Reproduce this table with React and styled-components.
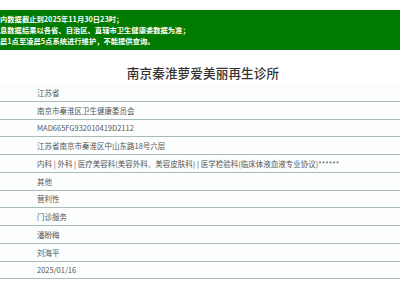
import React from "react";
import styled, { createGlobalStyle } from "styled-components";

const Global = createGlobalStyle`
  html, body { margin: 0; padding: 0; background: #ffffff; }
  body { font-family: "Noto Sans CJK SC", "Noto Sans", sans-serif; }
`;

const Page = styled.div`
  width: 400px;
  height: 286px;
  overflow: hidden;
  background: #ffffff;
  padding-top: 10px;
  box-sizing: border-box;
`;

const Banner = styled.div`
  background: #007a00;
  color: #ffffff;
  height: 40px;
  box-sizing: border-box;
  padding: 4px 0 0 0;
  overflow: hidden;
`;

const BannerLine = styled.div`
  font-size: 7.3px;
  font-weight: 700;
  line-height: 11px;
  white-space: nowrap;
`;

const TitleBox = styled.div`
  height: 34px;
  box-sizing: border-box;
  padding-top: 15px;
  text-align: center;
`;

const Title = styled.h1`
  margin: 0;
  font-size: 12.6px;
  line-height: 16px;
  font-weight: 500;
  color: #333333;
  letter-spacing: 0.1px;
  padding-left: 6px;
`;

const Table = styled.div`
  display: flex;
  flex-direction: column;
`;

const Row = styled.div`
  display: grid;
  grid-template-columns: 37px 1fr;
  align-items: center;
  height: 17.75px;
  box-sizing: border-box;
  border-bottom: 1px solid #a9bcb6;
  background: #fcfefe;
`;

const Label = styled.div``;

const Value = styled.div`
  font-size: 7.5px;
  line-height: 10px;
  color: #555555;
  white-space: nowrap;
  padding-top: 1px;
`;

const rows = [
  "江苏省",
  "南京市秦淮区卫生健康委员会",
  "MAD665FG932010419D2112",
  "江苏省南京市秦淮区中山东路18号六层",
  "内科 | 外科 | 医疗美容科(美容外科、美容皮肤科) | 医学检验科(临床体液血液专业协议)******",
  "其他",
  "营利性",
  "门诊服务",
  "潘盼梅",
  "刘海平",
  "2025/01/16",
];

export default function App() {
  return (
    <>
      <Global />
      <Page>
        <Banner>
          <BannerLine>内数据截止到2025年11月30日23时；</BannerLine>
          <BannerLine>息数据结果以各省、自治区、直辖市卫生健康委数据为准；</BannerLine>
          <BannerLine>晨1点至凌晨5点系统进行维护，不能提供查询。</BannerLine>
        </Banner>
        <TitleBox>
          <Title>南京秦淮萝爱美丽再生诊所</Title>
        </TitleBox>
        <Table>
          {rows.map((v, i) => (
            <Row key={i}>
              <Label />
              <Value>{v}</Value>
            </Row>
          ))}
        </Table>
      </Page>
    </>
  );
}
